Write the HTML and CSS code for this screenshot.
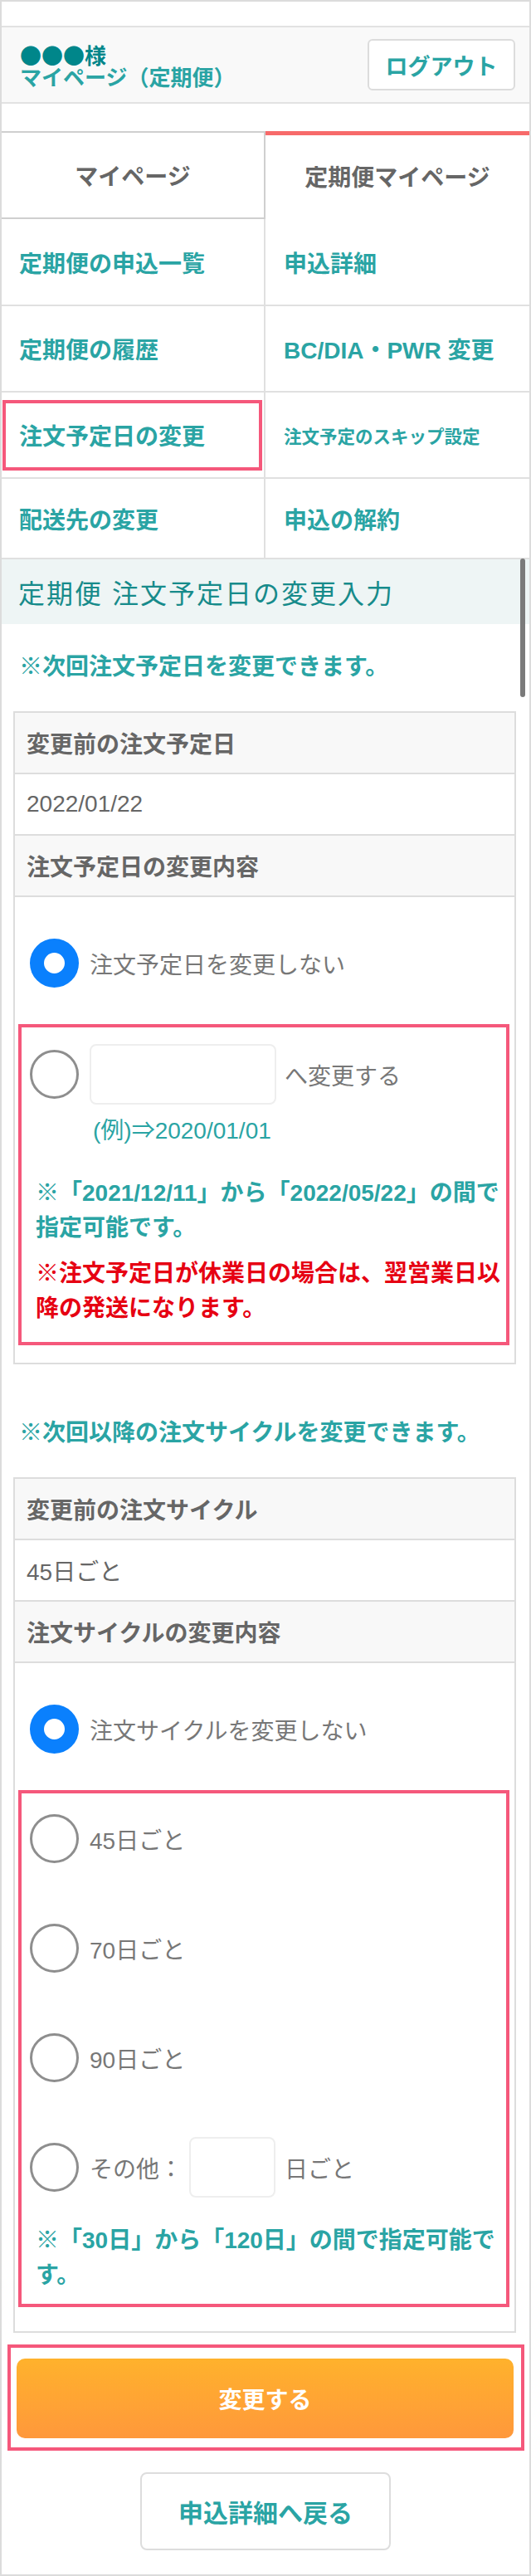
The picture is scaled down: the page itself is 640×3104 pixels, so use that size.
FILE: index.html
```html
<!DOCTYPE html>
<html lang="ja">
<head>
  <meta charset="utf-8">
  <title>定期便 注文予定日の変更入力</title>
  <meta name="viewport" content="width=device-width, initial-scale=1.0">
  <link rel="stylesheet" href="styles.css">
</head>
<body>
  <div class="page">
    <header class="account-bar">
      <div class="account-name">
        <div class="account-user">●●●様</div>
        <div class="account-title">マイページ（定期便）</div>
      </div>
      <a class="logout-btn" href="#">ログアウト</a>
    </header>

    <nav class="tabs">
      <a class="tab" href="#">マイページ</a>
      <a class="tab is-active" href="#">定期便マイページ</a>
    </nav>

    <ul class="sub-menu">
      <li><a href="#">定期便の申込一覧</a></li>
      <li><a href="#">申込詳細</a></li>
      <li><a href="#">定期便の履歴</a></li>
      <li><a href="#">BC/DIA・PWR 変更</a></li>
      <li class="is-marked"><a href="#">注文予定日の変更</a></li>
      <li class="is-small"><a href="#">注文予定のスキップ設定</a></li>
      <li><a href="#">配送先の変更</a></li>
      <li><a href="#">申込の解約</a></li>
    </ul>

    <h1 class="page-title">定期便 注文予定日の変更入力</h1>

    <p class="lead">※次回注文予定日を変更できます。</p>
    <div class="form-table">
      <div class="form-row form-head">変更前の注文予定日</div>
      <div class="form-row">2022/01/22</div>
      <div class="form-row form-head">注文予定日の変更内容</div>
      <div class="form-body">
        <label class="choice"><span class="radio is-checked"></span>注文予定日を変更しない</label>
        <div class="mark-box">
          <label class="choice"><span class="radio"></span><span class="text-field date-field"></span>へ変更する</label>
          <p class="example">(例)⇒2020/01/01</p>
          <p class="note">※「2021/12/11」から「2022/05/22」の間で指定可能です。</p>
          <p class="note note-alert">※注文予定日が休業日の場合は、翌営業日以降の発送になります。</p>
        </div>
      </div>
    </div>

    <p class="lead lead-cycle">※次回以降の注文サイクルを変更できます。</p>
    <div class="form-table">
      <div class="form-row form-head">変更前の注文サイクル</div>
      <div class="form-row">45日ごと</div>
      <div class="form-row form-head">注文サイクルの変更内容</div>
      <div class="form-body cycle-body">
        <label class="choice"><span class="radio is-checked"></span>注文サイクルを変更しない</label>
        <div class="mark-box cycle-box">
          <label class="choice"><span class="radio"></span>45日ごと</label>
          <label class="choice"><span class="radio"></span>70日ごと</label>
          <label class="choice"><span class="radio"></span>90日ごと</label>
          <label class="choice"><span class="radio"></span>その他：<span class="text-field days-field"></span>日ごと</label>
          <p class="note">※「30日」から「120日」の間で指定可能です。</p>
        </div>
      </div>
    </div>

    <div class="submit-box">
      <button class="submit-btn" type="button">変更する</button>
    </div>
    <a class="back-btn" href="#">申込詳細へ戻る</a>

    <div class="scroll-thumb"></div>
  </div>
</body>
</html>
```

FILE: styles.css
```css
body {
  margin: 0;
  padding: 0;
  font-family: "Liberation Sans", "Noto Sans CJK JP", sans-serif;
  color: #666;
  background: #fff;
}
a {
  text-decoration: none;
}
p {
  margin: 0;
}
.page {
  position: relative;
  box-sizing: border-box;
  width: 640px;
  min-height: 3104px;
  border: 2px solid #dcdcdc;
  padding-bottom: 29px;
}

/* account bar */
.account-bar {
  display: flex;
  align-items: center;
  justify-content: space-between;
  margin-top: 29px;
  height: 90px;
  padding: 0 17px 0 22px;
  background: #f9f9f9;
  border-top: 2px solid #e2e2e2;
  border-bottom: 2px solid #e2e2e2;
}
.account-name {
  font-weight: bold;
  font-size: 26px;
  line-height: 28px;
  margin-top: 4px;
}
.account-user {
  font-family: "Noto Sans CJK JP", sans-serif;
  color: #00868a;
}
.account-title {
  color: #2aa4a4;
}
.logout-btn {
  display: flex;
  align-items: center;
  justify-content: center;
  box-sizing: border-box;
  width: 178px;
  height: 62px;
  background: #fff;
  border: 2px solid #dcdcdc;
  border-radius: 6px;
  color: #2aa4a4;
  font-size: 27px;
  font-weight: bold;
}

/* tabs */
.tabs {
  display: flex;
  margin-top: 33px;
}
.tab {
  display: flex;
  align-items: center;
  justify-content: center;
  box-sizing: border-box;
  height: 106px;
  width: 318px;
  color: #666;
  font-size: 28px;
  font-weight: bold;
  border-top: 2px solid #cfcfcf;
  border-bottom: 2px solid #cfcfcf;
  border-right: 2px solid #cfcfcf;
}
.tab.is-active {
  border-top: 5px solid #f76a6a;
  border-bottom: 0;
  border-right: 0;
  padding-bottom: 4px;
}

/* sub menu */
.sub-menu {
  display: grid;
  grid-template-columns: 318px 318px;
  grid-template-rows: 105px 104px 104px 97px;
  margin: 0;
  padding: 0;
  list-style: none;
}
.sub-menu li {
  position: relative;
  display: flex;
  align-items: center;
  box-sizing: border-box;
  padding-left: 21px;
  border-bottom: 2px solid #e0e0e0;
}
.sub-menu li:nth-child(odd) {
  border-right: 2px solid #e0e0e0;
}
.sub-menu li:nth-child(even) {
  padding-left: 22px;
}
.sub-menu a {
  color: #2aa4a4;
  font-size: 28px;
  font-weight: bold;
}
.sub-menu li.is-small a {
  font-size: 21.5px;
}
.sub-menu li.is-marked::after {
  content: "";
  position: absolute;
  top: 9px;
  bottom: 8px;
  left: 1px;
  right: 2px;
  border: 4px solid #f5587b;
}

/* title */
.page-title {
  margin: 0;
  height: 78px;
  display: flex;
  align-items: center;
  padding-left: 20px;
  background: #eef5f5;
  color: #178b8b;
  font-size: 32px;
  font-weight: normal;
  letter-spacing: 2px;
}
.lead {
  margin: 31px 21px 32px;
  color: #2aa4a4;
  font-size: 28px;
  font-weight: bold;
  line-height: 42px;
}
.lead-cycle {
  margin-top: 62px;
}

/* form table */
.form-table {
  margin: 0 16px 0 14px;
  border: 2px solid #dddddd;
  border-bottom-width: 0;
}
.form-row {
  display: flex;
  align-items: center;
  height: 72px;
  padding: 0 14px;
  border-bottom: 2px solid #dddddd;
  font-size: 28px;
  color: #666;
}
.form-head {
  background: #f8f8f8;
  font-weight: bold;
}
.form-body {
  padding: 43px 6px 21px 4px;
  border-bottom: 2px solid #dddddd;
}
.cycle-body {
  padding-bottom: 29px;
}
.form-body > .choice {
  margin-left: 14px;
}
.choice {
  display: flex;
  align-items: center;
  min-height: 73px;
  font-size: 28px;
  color: #777;
}
.radio {
  flex: none;
  box-sizing: border-box;
  width: 59px;
  height: 59px;
  margin-right: 13px;
  border: 3px solid #8e8e8e;
  border-radius: 50%;
  background: #fff;
}
.radio.is-checked {
  border: 17px solid #0a80fd;
}
.text-field {
  display: inline-block;
  box-sizing: border-box;
  height: 73px;
  border: 2px solid #eeeeee;
  border-radius: 8px;
  background: #fff;
}
.date-field {
  width: 225px;
  margin-right: 10px;
}
.days-field {
  width: 104px;
  margin: 0 11px 0 8px;
}

.mark-box {
  margin-top: 37px;
  padding: 20px 0 19px 10px;
  border: 4px solid #f5587b;
}
.cycle-box {
  padding-top: 18px;
  padding-bottom: 13px;
}
.cycle-box .choice + .choice {
  margin-top: 59px;
}
.example {
  margin: 12px 0 0 76px;
  color: #2aa4a4;
  font-size: 28px;
  line-height: 40px;
}
.note {
  margin: 34px 0 0 7px;
  color: #2aa4a4;
  font-size: 28px;
  font-weight: bold;
  line-height: 42px;
}
.cycle-box .note {
  margin-top: 31px;
}
.note-alert {
  margin-top: 13px;
  color: #e60012;
}

/* buttons */
.submit-box {
  margin: 14px 6px 0 7px;
  padding: 13px 9px 11px 7px;
  border: 4px solid #f5587b;
}
.submit-btn {
  display: block;
  width: 100%;
  height: 96px;
  border: 0;
  border-radius: 10px;
  background: linear-gradient(#ffb22c, #ff983b);
  color: #fff;
  font-family: "Liberation Sans", "Noto Sans CJK JP", sans-serif;
  font-size: 28px;
  font-weight: bold;
}
.back-btn {
  display: flex;
  align-items: center;
  justify-content: center;
  box-sizing: border-box;
  width: 302px;
  height: 94px;
  margin: 26px auto 0;
  border: 2px solid #dddddd;
  border-radius: 8px;
  color: #2aa4a4;
  font-size: 30px;
  font-weight: bold;
}

/* scroll indicator seen in the capture */
.scroll-thumb {
  position: absolute;
  top: 671px;
  left: 625px;
  width: 6px;
  height: 167px;
  border-radius: 3px;
  background: #7a7a7a;
}
```
